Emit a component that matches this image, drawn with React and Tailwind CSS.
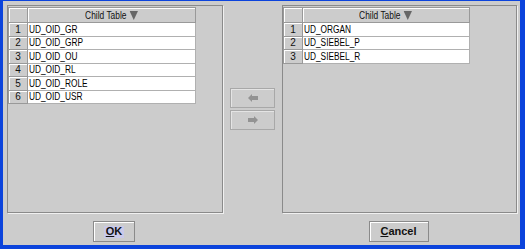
const leftRows = ["UD_OID_GR", "UD_OID_GRP", "UD_OID_OU", "UD_OID_RL", "UD_OID_ROLE", "UD_OID_USR"];
const rightRows = ["UD_ORGAN", "UD_SIEBEL_P", "UD_SIEBEL_R"];

function ChildTable({ rows, dataWidth }) {
  return (
    <div className="flex flex-col">
      <div className="flex h-[16px]">
        <div className="w-[20px] h-full bg-[#cccccc] border border-[#999999] shadow-[inset_1px_1px_0_#ffffff]" />
        <div
          className={`${dataWidth} h-full bg-[#cccccc] border border-l-0 border-[#999999] shadow-[inset_1px_1px_0_#ffffff] flex items-center justify-center text-[10px] text-[#111]`}
        >
          <div className="flex items-center gap-[4px] scale-x-[0.84] origin-center">
            <span>Child Table</span>
            <svg width="10" height="9" viewBox="0 0 10 9">
              <polygon points="0,0 10,0 5,9" fill="#666666" />
            </svg>
          </div>
        </div>
      </div>
      {rows.map((row, i) => (
        <div key={row} className="flex h-[13.5px]">
          <div className="w-[20px] h-full bg-[#cccccc] border border-t-0 border-[#999999] shadow-[inset_1px_1px_0_#ffffff] flex items-center justify-center text-[10px] text-[#111]">
            {i + 1}
          </div>
          <div className={`${dataWidth} h-full bg-white border-b border-r border-[#b0b0b0] flex items-center pl-px text-[10px] text-black`}>
            <span className="inline-block scale-x-[0.83] origin-left whitespace-nowrap">{row}</span>
          </div>
        </div>
      ))}
    </div>
  );
}

function DialogButton({ children, width, focused }) {
  return (
    <div
      className={`${width} h-[21px] border border-[#8a8a8a] bg-[#cccccc] shadow-[inset_1px_1px_0_#ffffff] flex items-center justify-center`}
    >
      <span
        className={`px-[2px] h-[12px] flex items-center text-[11px] font-bold text-[#111] ${
          focused ? "bg-[#c9c9ea]" : ""
        }`}
      >
        {children}
      </span>
    </div>
  );
}

function ArrowButton({ dir }) {
  return (
    <div className="w-[45px] h-[20px] border border-[#a8a8a8] bg-[#cccccc] shadow-[inset_1px_1px_0_#e4e4e4] flex items-center justify-center">
      <svg width="10" height="8" viewBox="0 0 10 8">
        {dir === "left" ? (
          <polygon points="0,4 4,0 4,2 10,2 10,6 4,6 4,8" fill="#939393" />
        ) : (
          <polygon points="10,4 6,0 6,2 0,2 0,6 6,6 6,8" fill="#939393" />
        )}
      </svg>
    </div>
  );
}

export default function App() {
  return (
    <div
      className="w-[525px] h-[249px] bg-[#0b43dc] pt-px pl-[3px] pr-[5px] pb-[4px]"
      style={{ fontFamily: '"Liberation Sans", Arial, sans-serif' }}
    >
      <div className="w-full h-full bg-[#cccccc] flex pt-[4px] pl-[4px] pr-[3px]">
        <div className="w-[216px] flex flex-col">
          <div className="h-[208px] border border-[#8a8a8a] shadow-[1px_1px_0_#f0f0f0] pt-px">
            <ChildTable rows={leftRows} dataWidth="w-[168px]" />
          </div>
          <div className="flex justify-center pt-[8px] pr-[2px]">
            <DialogButton width="w-[42px]" focused>
              <span className="underline">O</span>K
            </DialogButton>
          </div>
        </div>

        <div className="w-[59px] flex flex-col items-center gap-[2px] pt-[83px]">
          <ArrowButton dir="left" />
          <ArrowButton dir="right" />
        </div>

        <div className="w-[235px] flex flex-col">
          <div className="h-[208px] border border-[#8a8a8a] shadow-[1px_1px_0_#f0f0f0] pt-px">
            <ChildTable rows={rightRows} dataWidth="w-[167px]" />
          </div>
          <div className="flex justify-center pt-[8px] pr-[2px]">
            <DialogButton width="w-[60px]">
              <span className="underline">C</span>ancel
            </DialogButton>
          </div>
        </div>
      </div>
    </div>
  );
}
